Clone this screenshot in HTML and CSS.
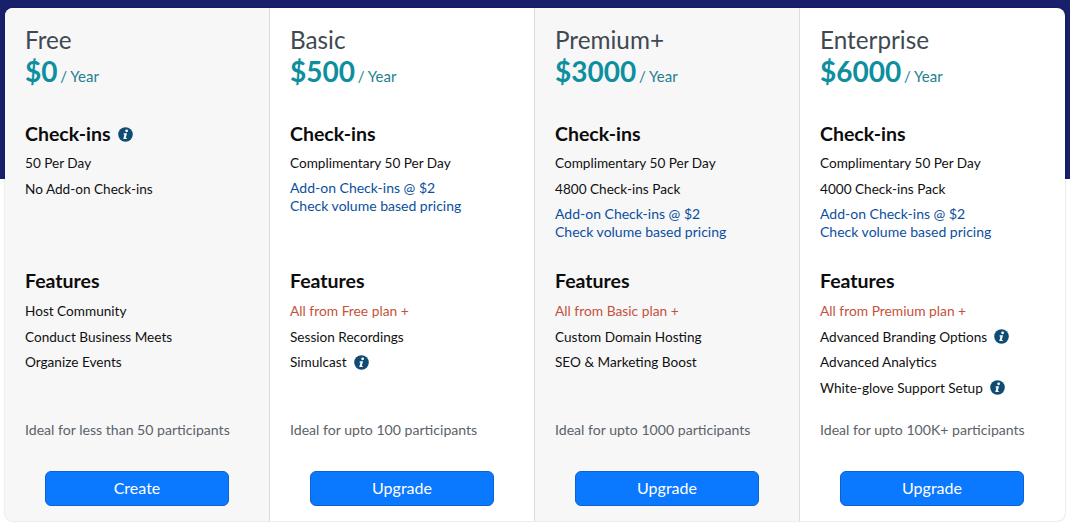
FILE: index.html
```html
<!DOCTYPE html>
<html lang="en">
<head>
<meta charset="utf-8">
<title>Plans</title>
<link rel="stylesheet" href="styles.css">
</head>
<body>
<div class="band"></div>
<main class="plans">
  <section class="plan shaded">
    <h2 class="name">Free</h2>
    <p class="price"><b>$0</b> <span>/ Year</span></p>
    <div class="checkins">
      <h3 class="heading">Check-ins <svg class="info" viewBox="0 0 16 16"><use href="#i"/></svg></h3>
      <p class="row">50 Per Day</p>
      <p class="row">No Add-on Check-ins</p>
    </div>
    <div class="features">
      <h3 class="heading">Features</h3>
      <p class="row">Host Community</p>
      <p class="row">Conduct Business Meets</p>
      <p class="row">Organize Events</p>
    </div>
    <p class="ideal">Ideal for less than 50 participants</p>
    <button class="cta">Create</button>
  </section>
  <section class="plan">
    <h2 class="name">Basic</h2>
    <p class="price"><b>$500</b> <span>/ Year</span></p>
    <div class="checkins">
      <h3 class="heading">Check-ins</h3>
      <p class="row">Complimentary 50 Per Day</p>
      <p class="addon">Add-on Check-ins @ $2<br>Check volume based pricing</p>
    </div>
    <div class="features">
      <h3 class="heading">Features</h3>
      <p class="row inherit">All from Free plan +</p>
      <p class="row">Session Recordings</p>
      <p class="row">Simulcast <svg class="info" viewBox="0 0 16 16"><use href="#i"/></svg></p>
    </div>
    <p class="ideal">Ideal for upto 100 participants</p>
    <button class="cta">Upgrade</button>
  </section>
  <section class="plan shaded">
    <h2 class="name">Premium+</h2>
    <p class="price"><b>$3000</b> <span>/ Year</span></p>
    <div class="checkins">
      <h3 class="heading">Check-ins</h3>
      <p class="row">Complimentary 50 Per Day</p>
      <p class="row">4800 Check-ins Pack</p>
      <p class="addon">Add-on Check-ins @ $2<br>Check volume based pricing</p>
    </div>
    <div class="features">
      <h3 class="heading">Features</h3>
      <p class="row inherit">All from Basic plan +</p>
      <p class="row">Custom Domain Hosting</p>
      <p class="row">SEO &amp; Marketing Boost</p>
    </div>
    <p class="ideal">Ideal for upto 1000 participants</p>
    <button class="cta">Upgrade</button>
  </section>
  <section class="plan">
    <h2 class="name">Enterprise</h2>
    <p class="price"><b>$6000</b> <span>/ Year</span></p>
    <div class="checkins">
      <h3 class="heading">Check-ins</h3>
      <p class="row">Complimentary 50 Per Day</p>
      <p class="row">4000 Check-ins Pack</p>
      <p class="addon">Add-on Check-ins @ $2<br>Check volume based pricing</p>
    </div>
    <div class="features">
      <h3 class="heading">Features</h3>
      <p class="row inherit">All from Premium plan +</p>
      <p class="row">Advanced Branding Options <svg class="info" viewBox="0 0 16 16"><use href="#i"/></svg></p>
      <p class="row">Advanced Analytics</p>
      <p class="row">White-glove Support Setup <svg class="info" viewBox="0 0 16 16"><use href="#i"/></svg></p>
    </div>
    <p class="ideal">Ideal for upto 100K+ participants</p>
    <button class="cta">Upgrade</button>
  </section>
</main>
<svg class="defs" width="0" height="0">
  <symbol id="i" viewBox="0 0 16 16">
    <circle cx="8" cy="8" r="7.8" fill="#0f4c75"/>
    <circle cx="9.2" cy="4.1" r="1.5" fill="#fff"/>
    <path d="M6.1 6.7h3.5l-1.3 5h1.2l-.3 1.2H5.6l1.3-5H5.8z" fill="#fff"/>
  </symbol>
</svg>
</body>
</html>
```
FILE: styles.css
```css
* { box-sizing: border-box; }
html, body { margin: 0; }
body {
  width: 1070px;
  height: 525px;
  overflow: hidden;
  background: #fff;
  font-family: "Lato", "Noto Sans", sans-serif;
  color: #111;
  padding: 8px 5px 4px;
  position: relative;
}
.band {
  position: absolute;
  left: 0;
  top: 0;
  width: 100%;
  height: 179px;
  background: #181f6b;
}
.plans {
  position: relative;
  display: grid;
  grid-template-columns: repeat(4, 265px);
  height: 513px;
  background: #fff;
  border-radius: 8px;
  overflow: hidden;
  box-shadow: 0 0 2px rgba(0, 0, 0, .25);
}
.plan {
  display: flex;
  flex-direction: column;
  padding: 16px 20px 0;
  border-right: 1px solid #dcdcdc;
}
.plan:last-child { border-right-color: transparent; }
.shaded { background: #f7f7f8; }
.name {
  margin: 0;
  height: 31px;
  font-size: 24.3px;
  line-height: 32px;
  font-weight: 400;
  color: #3f4952;
}
.price {
  margin: 0;
  height: 32px;
  line-height: 32px;
  color: #0e8fa0;
  font-size: 15px;
}
.price b { font-size: 28px; font-weight: 700; }
.price span { margin-left: -1px; color: #23808f; }
.checkins { margin-top: 35px; height: 147px; }
.heading {
  margin: 0 0 4px;
  font-size: 19.5px;
  line-height: 24px;
  font-weight: 700;
  color: #0c0c0c;
  display: flex;
  align-items: center;
  gap: 7px;
}
.row {
  margin: 0;
  font-size: 13.6px;
  line-height: 26px;
  height: 25.7px;
  display: flex;
  align-items: center;
  gap: 7px;
}
.addon {
  margin: 3.4px 0 0;
  font-size: 14px;
  line-height: 18px;
  color: #0b4f9c;
}
.inherit { color: #c4523a; font-size: 13.8px; }
.features { height: 151px; }
.features .heading { margin-bottom: 5px; }
.ideal {
  margin: 0;
  font-size: 14.1px;
  line-height: 20px;
  color: #5b6269;
}
.cta {
  display: block;
  width: 184px;
  height: 35px;
  margin: 31px auto 0;
  padding: 0 0 2px;
  border: 1px solid #0b63d1;
  border-radius: 6px;
  background: #0a78ff;
  color: #fff;
  font: 400 16px "Lato", "Noto Sans", sans-serif;
}
.info { width: 15px; height: 15px; flex: none; }
.defs { position: absolute; }
```
